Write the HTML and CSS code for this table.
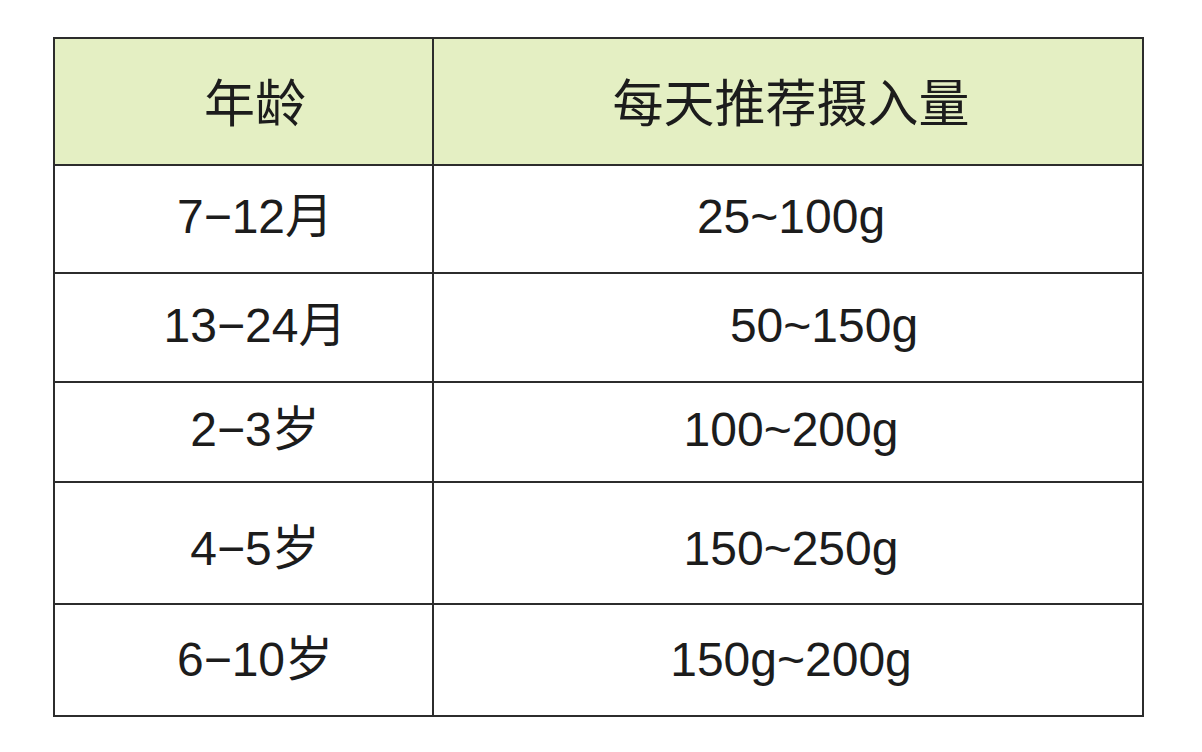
FILE: index.html
```html
<!DOCTYPE html>
<html lang="zh">
<head>
<meta charset="utf-8">
<title>每天推荐摄入量</title>
<link rel="stylesheet" href="styles.css">
</head>
<body>
<div class="table">
  <div class="cell head age r0">年龄</div>
  <div class="cell head amount r0">每天推荐摄入量</div>

  <div class="cell age r1">7−12月</div>
  <div class="cell amount r1">25~100g</div>

  <div class="cell age r2">13−24月</div>
  <div class="cell amount shifted r2">50~150g</div>

  <div class="cell age r3">2−3岁</div>
  <div class="cell amount r3">100~200g</div>

  <div class="cell age r4">4−5岁</div>
  <div class="cell amount r4">150~250g</div>

  <div class="cell age r5">6−10岁</div>
  <div class="cell amount r5">150g~200g</div>
</div>
</body>
</html>
```

FILE: styles.css
```css
html, body {
  margin: 0;
  padding: 0;
  background: #ffffff;
}

body {
  font-family: "Liberation Sans", Arial, "Noto Sans CJK SC", sans-serif;
  color: #1c1c1c;
}

.table {
  display: grid;
  grid-template-columns: 379px 710px;
  grid-template-rows: 127px 108px 109px 100px 122px 112px;
  margin: 37px 0 0 53px;
  width: max-content;
  border-top: 2px solid #2c2c2c;
  border-left: 2px solid #2c2c2c;
}

.cell {
  box-sizing: border-box;
  display: flex;
  align-items: center;
  justify-content: center;
  border-right: 2px solid #2c2c2c;
  border-bottom: 2px solid #2c2c2c;
  font-size: 48px;
  line-height: 1;
  background: #ffffff;
  white-space: nowrap;
}

.head {
  background: #e4efc3;
  font-size: 51px;
  padding-top: 6px;
}

.age {
  padding-left: 23px;
}

.amount {
  padding-left: 6px;
}

.amount.shifted {
  padding-left: 72px;
}

.r1, .r2, .r3 {
  padding-bottom: 4px;
}

.r4 {
  padding-top: 12px;
}
```
